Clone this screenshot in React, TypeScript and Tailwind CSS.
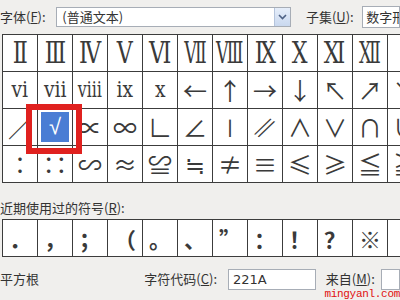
import React from "react";

const row1 = ["Ⅱ", "Ⅲ", "Ⅳ", "Ⅴ", "Ⅵ", "Ⅶ", "Ⅷ", "Ⅸ", "Ⅹ", "Ⅺ", "Ⅻ", ""];
const row2 = ["ⅵ", "ⅶ", "ⅷ", "ⅸ", "ⅹ", "←", "↑", "→", "↓", "↖", "↗", "↘"];
const row3 = ["／", "√", "∝", "∞", "∟", "∠", "∣", "∥", "∧", "∨", "∩", "∪"];
const row4 = ["∶", "∷", "∽", "≈", "≌", "≒", "≠", "≡", "≤", "≥", "≦", "≧"];
const recent = ["．", "，", "；", "（", "。", "、", "”", "：", "！", "？", "※", ""];

const ui = { fontFamily: '"Noto Sans CJK SC", "DejaVu Sans", sans-serif' };
const serif = { fontFamily: '"DejaVu Serif", "Noto Sans CJK SC", serif' };
const cjk = { fontFamily: '"Noto Sans CJK SC", "DejaVu Sans", sans-serif' };

const wideRoman = ["Ⅶ", "Ⅷ", "Ⅻ"];

function Cell({ ch, kind, selected }: { ch: string; kind: "roman" | "small" | "sym" | "recent"; selected?: boolean }) {
  if (selected) {
    return (
      <div className="bg-white h-[36px] p-[3px]">
        <div
          className="w-full h-full bg-[#4a7dd4] flex items-center justify-center text-white text-[22px] leading-none"
          style={{ fontFamily: '"Liberation Sans", "DejaVu Sans", sans-serif' }}
        >
          {ch}
        </div>
      </div>
    );
  }
  let cls = "";
  let font = cjk;
  if (kind === "roman") {
    cls = wideRoman.includes(ch) ? "text-[30px] scale-x-[0.58]" : "text-[30px] scale-x-[0.74]";
    font = serif;
  } else if (kind === "small") {
    cls = ch === "ⅷ" ? "text-[22px] scale-x-[0.72]" : "text-[22px] scale-x-[0.85]";
    font = serif;
  } else if (kind === "sym") {
    cls = "text-[24px]";
  } else {
    cls = "text-[22px] font-bold";
  }
  return (
    <div className="bg-white h-[36px] flex items-center justify-center overflow-hidden">
      <span
        className={`${cls} leading-none text-[#3a3a3a] inline-block whitespace-nowrap ${ch === "∥" ? "-skew-x-[28deg]" : ""}`}
        style={font}
      >
        {ch}
      </span>
    </div>
  );
}

export default function App() {
  return (
    <div className="w-[400px] h-[300px] bg-[#f0efed] overflow-hidden relative text-[13px] text-[#333]" style={ui}>
      {/* top bar */}
      <div className="h-[34px] flex items-center whitespace-nowrap">
        <span className="w-[60px] leading-4">
          字体(<u>F</u>):
        </span>
        <div className="w-[250px] h-[20px] border border-[#a7adb6] bg-white flex items-center">
          <span className="flex-1 pl-[5px] leading-4">(普通文本)</span>
          <div className="w-[16px] h-full bg-gradient-to-b from-[#e6eefa] to-[#c9d8ef] border-l border-[#b5c4dc] flex items-center justify-center">
            <svg width="9" height="6" viewBox="0 0 9 6">
              <path d="M1 1 L4.5 4.5 L8 1" stroke="#4d6185" strokeWidth="1.6" fill="none" />
            </svg>
          </div>
        </div>
        <span className="ml-[15px] w-[60px] leading-4">
          子集(<u>U</u>):
        </span>
        <div className="h-[22px] w-[40px] border border-[#a7adb6] bg-white pl-[3px] leading-[20px] overflow-hidden">数字形式</div>
      </div>

      {/* symbol grid */}
      <div className="ml-[2px] w-[421px] bg-[#3c3c3c] p-px grid grid-cols-[repeat(12,34px)] gap-px">
        {row1.map((c, i) => (
          <Cell key={"a" + i} ch={c} kind="roman" />
        ))}
        {row2.map((c, i) => (
          <Cell key={"b" + i} ch={c} kind={i < 5 ? "small" : "sym"} />
        ))}
        {row3.map((c, i) => (
          <Cell key={"c" + i} ch={c} kind="sym" selected={i === 1} />
        ))}
        {row4.map((c, i) => (
          <Cell key={"d" + i} ch={c} kind="sym" />
        ))}
      </div>

      {/* recent label */}
      <div className="h-[36px] pt-[17px] leading-4 whitespace-nowrap">
        近期使用过的符号(<u>R</u>):
      </div>

      {/* recent row */}
      <div className="ml-[2px] w-[421px] bg-[#3c3c3c] p-px grid grid-cols-[repeat(12,34px)] gap-px">
        {recent.map((c, i) => (
          <Cell key={"r" + i} ch={c} kind="recent" />
        ))}
      </div>

      {/* bottom row */}
      <div className="h-[34px] mt-[5px] flex items-center whitespace-nowrap">
        <span className="w-[150px] leading-4">平方根</span>
        <span className="w-[87px] leading-4">
          字符代码(<u>C</u>):
        </span>
        <div
          className="w-[91px] h-[21px] border border-[#a7adb6] bg-white pl-[4px] leading-[19px]"
          style={{ fontFamily: '"DejaVu Sans", sans-serif' }}
        >
          221A
        </div>
        <span className="ml-[10px] w-[57px] leading-4">
          来自(<u>M</u>):
        </span>
        <div className="h-[21px] w-[20px] border border-[#a7adb6] bg-white" />
      </div>

      {/* watermark */}
      <div
        className="absolute right-0 bottom-0 text-[11px] leading-[11px] text-[#e01010] tracking-[-0.3px]"
        style={{ fontFamily: '"Liberation Mono", "DejaVu Sans Mono", monospace' }}
      >
        mingyanl.com
      </div>

      {/* red highlight box */}
      <div className="absolute left-[26px] top-[104px] w-[56px] h-[50px] border-[6px] border-[#e0211f]" />
    </div>
  );
}
